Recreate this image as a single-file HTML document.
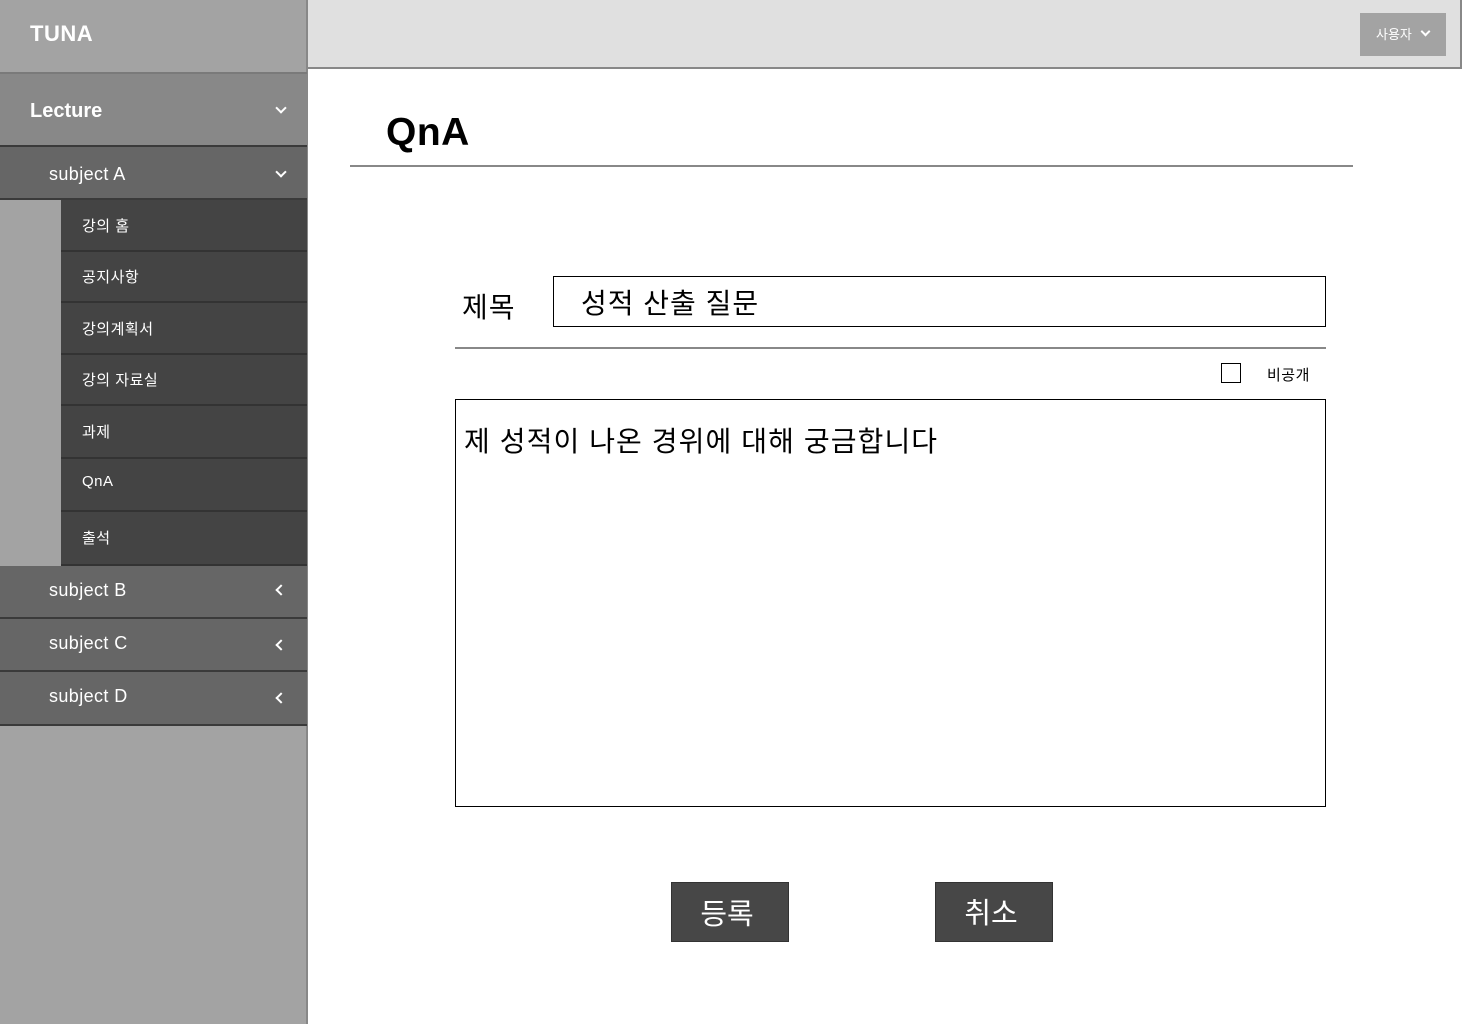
<!DOCTYPE html>
<html><head><meta charset="utf-8"><style>
*{margin:0;padding:0;box-sizing:border-box}
body{width:1462px;height:1024px;position:relative;background:#fff;overflow:hidden;font-family:"Liberation Sans","Noto Sans CJK KR",sans-serif}
.a{position:absolute}
.w{color:#fff}
.chev{position:absolute;right:22px;width:8px;height:8px;border-right:2px solid #fff;border-bottom:2px solid #fff}
.down{transform:rotate(45deg)}
.left{transform:rotate(135deg)}
.sub{position:absolute;left:0;width:307px;height:53px;background:#666;border-bottom:2px solid #3a3a3a;color:#fff;font-size:18px;letter-spacing:0.4px;padding-left:49px;line-height:48px}
.sub .chev{top:20px}
.it{position:absolute;left:61px;width:246px;background:#444;border-bottom:2px solid #333;color:#fff;font-size:15px;letter-spacing:0.5px;padding-left:21px}
</style></head><body>
<div class="a" style="left:0;top:0;width:308px;height:1024px;background:#a3a3a3;border-right:2px solid #888"></div>
<div class="a" style="left:308px;top:0;width:1154px;height:69px;background:#e0e0e0;border-bottom:2px solid #888;border-right:2px solid #888"></div>
<div class="a w" style="left:30px;top:21px;font-size:22px;font-weight:bold;letter-spacing:0.5px">TUNA</div>
<div class="a" style="left:0;top:72px;width:307px;height:75px;background:#888;border-top:2px solid #7a7a7a;border-bottom:2px solid #3a3a3a"><div class="chev down" style="top:30px"></div></div>
<div class="a w" style="left:30px;top:100px;font-size:20px;font-weight:bold">Lecture</div>
<div class="sub" style="top:147px;line-height:54px">subject A<div class="chev down" style="top:21px"></div></div>
<div class="a" style="left:0;top:200px;width:61px;height:365px;background:#a3a3a3"></div>
<div class="it" style="top:200px;height:52px;line-height:53px">강의 홈</div>
<div class="it" style="top:252px;height:51px;line-height:52px">공지사항</div>
<div class="it" style="top:303px;height:52px;line-height:53px">강의계획서</div>
<div class="it" style="top:355px;height:51px;line-height:52px">강의 자료실</div>
<div class="it" style="top:406px;height:53px;line-height:53px">과제</div>
<div class="it" style="top:459px;height:53px;line-height:46px">QnA</div>
<div class="it" style="top:512px;height:54px;line-height:53px">출석</div>
<div class="sub" style="top:566px">subject B<div class="chev left"></div></div>
<div class="sub" style="top:619px">subject C<div class="chev left" style="top:22px"></div></div>
<div class="sub" style="top:672px;height:54px">subject D<div class="chev left" style="top:22px"></div></div>
<div class="a" style="left:1360px;top:13px;width:86px;height:43px;background:#a3a3a3;color:#fff;font-size:13px;line-height:43px;padding-left:16px">사용자<div class="chev down" style="right:17px;top:15px;width:7px;height:7px"></div></div>
<div class="a" style="left:386px;top:111px;font-size:39px;font-weight:bold;letter-spacing:0.5px">QnA</div>
<div class="a" style="left:350px;top:165px;width:1003px;height:2px;background:#888"></div>
<div class="a" style="left:462px;top:286px;font-size:28px;letter-spacing:1px">제목</div>
<div class="a" style="left:553px;top:276px;width:773px;height:51px;border:1.5px solid #000;font-size:28px;letter-spacing:1px;padding-left:27px;line-height:54px">성적 산출 질문</div>
<div class="a" style="left:455px;top:347px;width:871px;height:2px;background:#888"></div>
<div class="a" style="left:1221px;top:363px;width:20px;height:20px;border:1.5px solid #000"></div>
<div class="a" style="left:1267px;top:364px;font-size:15px;letter-spacing:0.5px">비공개</div>
<div class="a" style="left:455px;top:399px;width:871px;height:408px;border:1.5px solid #000;font-size:28px;letter-spacing:1.1px;padding:20px 0 0 8px">제 성적이 나온 경위에 대해 궁금합니다</div>
<div class="a w" style="left:671px;top:882px;width:118px;height:60px;background:#474747;border:1px solid #333;font-size:29px;text-align:center;line-height:64px;padding-right:6px">등록</div>
<div class="a w" style="left:935px;top:882px;width:118px;height:60px;background:#474747;border:1px solid #333;font-size:29px;text-align:center;line-height:62px;padding-right:6px">취소</div>
</body></html>
